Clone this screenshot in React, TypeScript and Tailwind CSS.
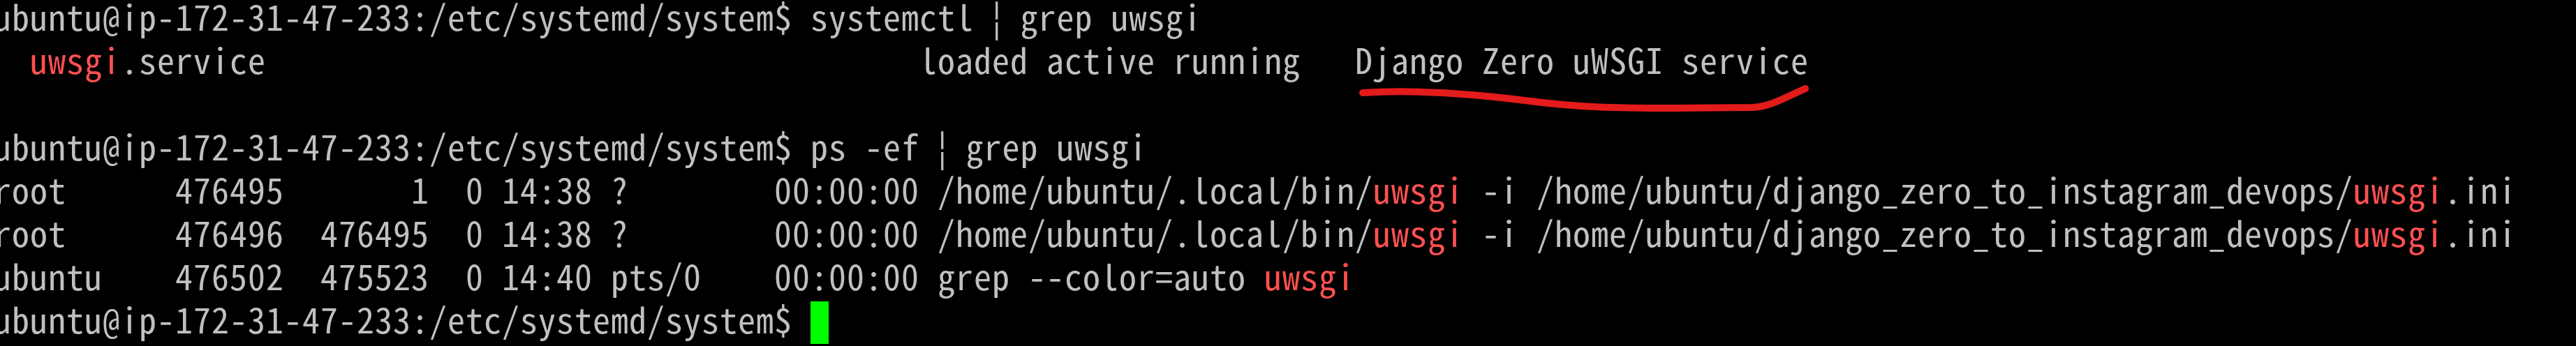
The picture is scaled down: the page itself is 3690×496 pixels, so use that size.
import React from "react";

const R = ({ children }: { children: React.ReactNode }) => (
  <span className="text-[#ff5050]">{children}</span>
);

const PROMPT = "ubuntu@ip-172-31-47-233:/etc/systemd/system$ ";

export default function App() {
  return (
    <div className="relative w-[3690px] h-[496px] bg-black overflow-hidden">
      <div className="ml-[-9px] mt-[-9px] font-['Noto_Sans_Mono_CJK_KR','DejaVu_Sans_Mono',monospace] text-[50px] tracking-[1px] leading-[62px] text-[#c0c0c0] whitespace-pre">
        <div className="h-[62px]">{PROMPT}systemctl ¦ grep uwsgi</div>
        <div className="h-[62px]">
          {"  "}
          <R>uwsgi</R>
          {".service                                    loaded active running   Django Zero uWSGI service"}
        </div>
        <div className="h-[62px]"> </div>
        <div className="h-[62px]">{PROMPT}ps -ef ¦ grep uwsgi</div>
        <div className="h-[62px]">
          {"root      476495       1  0 14:38 ?        00:00:00 /home/ubuntu/.local/bin/"}
          <R>uwsgi</R>
          {" -i /home/ubuntu/django_zero_to_instagram_devops/"}
          <R>uwsgi</R>
          {".ini"}
        </div>
        <div className="h-[62px]">
          {"root      476496  476495  0 14:38 ?        00:00:00 /home/ubuntu/.local/bin/"}
          <R>uwsgi</R>
          {" -i /home/ubuntu/django_zero_to_instagram_devops/"}
          <R>uwsgi</R>
          {".ini"}
        </div>
        <div className="h-[62px]">
          {"ubuntu    476502  475523  0 14:40 pts/0    00:00:00 grep --color=auto "}
          <R>uwsgi</R>
        </div>
        <div className="h-[62px] flex items-start">
          <span>{PROMPT}</span>
          <span className="inline-block w-[26px] h-[61px] mt-[7px] bg-[#00ff00]"></span>
        </div>
      </div>
      <svg
        className="absolute left-0 top-0 pointer-events-none"
        width="3690"
        height="496"
        viewBox="0 0 3690 496"
      >
        <path
          d="M1952 133 C2030 128 2110 134 2200 146 C2260 153 2300 155 2400 155 L2510 154 C2530 153 2545 146 2560 139 L2586 127"
          fill="none"
          stroke="#e31b1b"
          strokeWidth="10"
          strokeLinecap="round"
          strokeLinejoin="round"
        />
      </svg>
    </div>
  );
}
